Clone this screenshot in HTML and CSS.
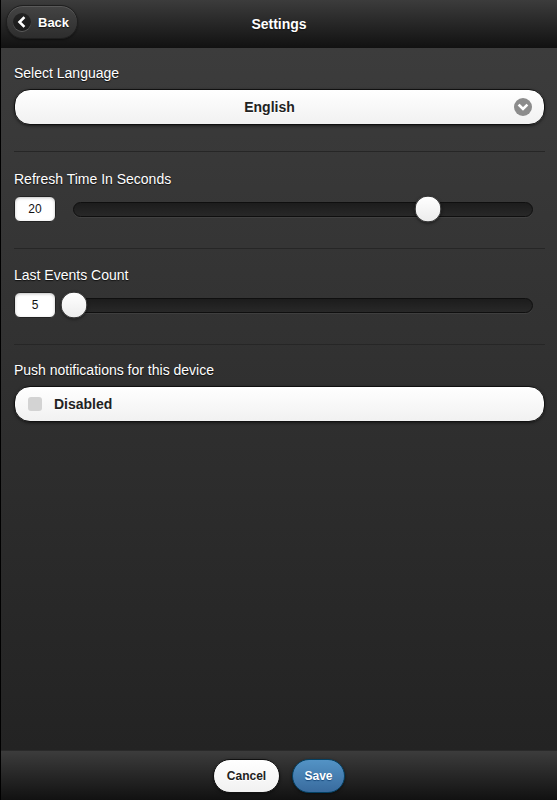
FILE: index.html
```html
<!DOCTYPE html>
<html>
<head>
<meta charset="utf-8">
<link rel="stylesheet" href="styles.css">
</head>
<body>
<div class="page">
  <header class="header">
    <a class="btn-back">
      <span class="icon-circle">
        <svg width="18" height="18" viewBox="0 0 18 18"><path d="M10.5 5 L6.5 9 L10.5 13" fill="none" stroke="#fff" stroke-width="2.6" stroke-linecap="square"/></svg>
      </span>
      <span class="back-text">Back</span>
    </a>
    <h1 class="title">Settings</h1>
  </header>

  <main class="content">
    <div class="field first">
      <div class="label">Select Language</div>
      <div class="select">
        <span class="select-text">English</span>
        <span class="select-icon">
          <svg width="18" height="18" viewBox="0 0 18 18"><path d="M5.5 7.5 L9 11 L12.5 7.5" fill="none" stroke="#fff" stroke-width="2.6" stroke-linecap="square"/></svg>
        </span>
      </div>
    </div>

    <div class="field slider-field second">
      <div class="label">Refresh Time In Seconds</div>
      <div class="slider-row">
        <div class="slider-input">20</div>
        <div class="track">
          <span class="thumb" style="left: 77.3%"></span>
        </div>
      </div>
    </div>

    <div class="field slider-field">
      <div class="label">Last Events Count</div>
      <div class="slider-row">
        <div class="slider-input">5</div>
        <div class="track">
          <span class="thumb" style="left: 0%"></span>
        </div>
      </div>
    </div>

    <div class="field last">
      <div class="label">Push notifications for this device</div>
      <div class="checkbox">
        <span class="box"></span>
        <span class="checkbox-text">Disabled</span>
      </div>
    </div>
  </main>

  <footer class="footer">
    <a class="btn btn-cancel">Cancel</a>
    <a class="btn btn-save">Save</a>
  </footer>
</div>
</body>
</html>
```

FILE: styles.css
```css
html, body {
  margin: 0;
  padding: 0;
  height: 100%;
}
body {
  font-family: "Liberation Sans", Arial, Helvetica, sans-serif;
  background: #222;
}
.page {
  height: 800px;
  display: flex;
  flex-direction: column;
  border-left: 1px solid #000;
  box-sizing: border-box;
}
.header {
  height: 48px;
  flex: none;
  background: linear-gradient(#3c3c3c, #111);
  position: relative;
  display: flex;
  align-items: center;
  justify-content: center;
}
.btn-back {
  position: absolute;
  left: 5px;
  top: 5px;
  width: 72px;
  height: 34px;
  box-sizing: border-box;
  border: 1px solid #1f1f1f;
  border-radius: 17px;
  background: linear-gradient(#444, #2d2d2d);
  box-shadow: inset 0 1px 0 rgba(255,255,255,0.12), 0 1px 2px rgba(0,0,0,0.4);
  display: flex;
  align-items: center;
}
.icon-circle {
  width: 18px;
  height: 18px;
  margin-left: 6px;
  border-radius: 50%;
  background: rgba(0,0,0,0.45);
  box-shadow: 0 1px 0 rgba(255,255,255,0.2);
  display: flex;
}
.back-text {
  margin-left: 7px;
  color: #fff;
  font-weight: bold;
  font-size: 13px;
  text-shadow: 0 1px 1px #111;
}
.title {
  margin: 0;
  color: #fff;
  font-size: 14px;
  font-weight: bold;
  text-shadow: 0 1px 1px #111;
}
.content {
  flex: 1;
  background: linear-gradient(#3c3c3c, #232323);
  padding: 0 12px 0 13px;
}
.field {
  padding: 17px 0 26px;
  border-bottom: 1px solid #262626;
}
.field.first {
  padding-top: 16px;
}
.field.second {
  padding-top: 18px;
}
.field.last {
  padding-top: 16px;
  border-bottom: none;
}
.label {
  color: #fff;
  font-size: 14px;
  line-height: 18px;
  text-shadow: 0 1px 1px #111;
  margin-bottom: 7px;
}
.slider-field .label {
  margin-bottom: 8px;
}
.select, .checkbox {
  height: 36px;
  box-sizing: border-box;
  border: 1px solid #111;
  border-radius: 16px;
  background: linear-gradient(#fff, #f1f1f1);
  box-shadow: 0 1px 3px rgba(0,0,0,0.5);
  display: flex;
  align-items: center;
  position: relative;
}
.select {
  justify-content: center;
  padding: 0 35px 0 15px;
}
.select-text, .checkbox-text {
  font-size: 14px;
  font-weight: bold;
  color: #222;
  text-shadow: 0 1px 0 #fff;
}
.select-icon {
  position: absolute;
  right: 12px;
  top: 8px;
  width: 18px;
  height: 18px;
  border-radius: 50%;
  background: #8c8c8c;
  display: flex;
}
.checkbox {
  padding-left: 13px;
}
.box {
  width: 14px;
  height: 14px;
  border-radius: 3px;
  background: #d3d3d3;
  margin-right: 12px;
}
.slider-row {
  display: flex;
  align-items: center;
  height: 26px;
}
.slider-input {
  flex: none;
  width: 42px;
  height: 26px;
  box-sizing: border-box;
  border: 1px solid #222;
  border-radius: 6px;
  background: #fff;
  box-shadow: inset 0 1px 3px rgba(0,0,0,0.25);
  display: flex;
  align-items: center;
  justify-content: center;
  font-size: 12px;
  color: #111;
}
.track {
  flex: 1;
  margin-left: 17px;
  margin-right: 12px;
  height: 15px;
  box-sizing: border-box;
  border: 1px solid #0f0f0f;
  border-radius: 8px;
  background: linear-gradient(#1c1c1c, #282828);
  box-shadow: 0 1px 0 rgba(255,255,255,0.06);
  position: relative;
}
.thumb {
  position: absolute;
  top: 50%;
  width: 27px;
  height: 27px;
  box-sizing: border-box;
  border-radius: 50%;
  border: 1px solid #333;
  background: linear-gradient(#fff, #ececec);
  box-shadow: 0 1px 3px rgba(0,0,0,0.5);
  transform: translate(-50%, -50%);
}
.footer {
  height: 50px;
  flex: none;
  box-sizing: border-box;
  border-top: 1px solid #2a2a2a;
  background: linear-gradient(#3c3c3c, #111);
  display: flex;
  align-items: center;
  justify-content: center;
  gap: 12px;
}
.btn {
  height: 34px;
  box-sizing: border-box;
  border-radius: 17px;
  display: flex;
  align-items: center;
  justify-content: center;
  font-size: 12px;
  font-weight: bold;
  box-shadow: 0 1px 3px rgba(0,0,0,0.5);
}
.btn-cancel {
  width: 67px;
  border: 1px solid #111;
  background: linear-gradient(#fff, #f1f1f1);
  color: #222;
  text-shadow: 0 1px 0 #fff;
}
.btn-save {
  width: 53px;
  border: 1px solid #044062;
  background: linear-gradient(#5393c5, #396b9e);
  color: #fff;
  text-shadow: 0 1px 1px #194b7e;
}
```
